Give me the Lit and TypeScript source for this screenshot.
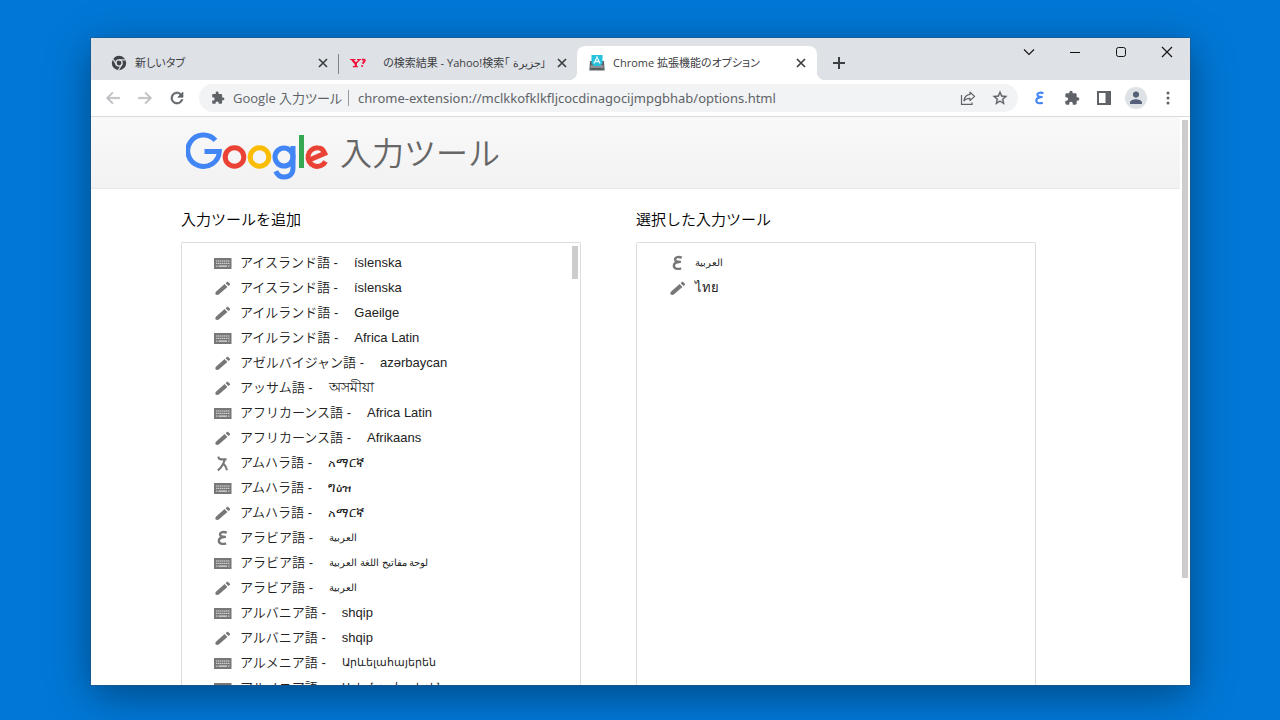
import { LitElement, html, css, svg, nothing } from "lit";
import { customElement, property } from "lit/decorators.js";

type IconName =
  | "back" | "forward" | "reload" | "puzzle" | "share" | "star" | "ain" | "panel"
  | "person" | "more" | "close" | "plus" | "chevron" | "minimize" | "maximize"
  | "exit" | "keyboard" | "pencil" | "amharic" | "chrome" | "yahoo" | "inputtools";

const keyDots = (y: number, from: number, count: number) =>
  Array.from({ length: count }, (_, i) => svg`<rect x=${from + i * 2} y=${y} width="1.2" height="1.2"/>`);

const ICONS: Record<IconName, { box: string; art: unknown }> = {
  back: { box: "0 0 24 24", art: svg`<path fill="currentColor" stroke="currentColor" stroke-width=".5" d="M21 11H6.83l5.59-5.59L11 4l-8 8 8 8 1.41-1.41L6.83 13H21z"/>` },
  forward: { box: "0 0 24 24", art: svg`<path fill="currentColor" stroke="currentColor" stroke-width=".5" d="M3 11h14.17l-5.59-5.59L13 4l8 8-8 8-1.41-1.41L17.17 13H3z"/>` },
  reload: { box: "0 0 24 24", art: svg`<path fill="currentColor" d="M17.65 6.35A7.96 7.96 0 0 0 12 4a8 8 0 1 0 7.73 10h-2.08A6 6 0 1 1 12 6c1.66 0 3.14.69 4.22 1.78L13 11h7V4z" stroke="currentColor" stroke-width=".9"/>` },
  puzzle: { box: "0 0 24 24", art: svg`<path fill="currentColor" d="M20.5 11H19V7c0-1.1-.9-2-2-2h-4V3.5a2.5 2.5 0 0 0-5 0V5H4c-1.1 0-2 .9-2 2v3.8h1.5a2.7 2.7 0 0 1 0 5.4H2V20c0 1.1.9 2 2 2h3.8v-1.5a2.7 2.7 0 0 1 5.4 0V22H17c1.1 0 2-.9 2-2v-4h1.5a2.5 2.5 0 0 0 0-5z"/>` },
  share: { box: "0 0 16 16", art: svg`<path fill="none" stroke="currentColor" stroke-width="1.2" stroke-linejoin="round" d="M1.5 5v9.4h10.6v-2M10 2.2l4.6 4.2L10 10.6V8.3C7 8.2 5.3 9 4 10.8c.4-3.6 2.3-6 6-6.4z"/>` },
  star: { box: "1 1 22 22", art: svg`<path fill="currentColor" stroke="currentColor" stroke-width=".4" d="M22 9.24l-7.19-.62L12 2 9.19 8.63 2 9.24l5.46 4.73L5.82 21 12 17.27 18.18 21l-1.63-7.03zM12 15.4l-3.76 2.27 1-4.28-3.32-2.88 4.38-.38L12 6.1l1.71 4.04 4.38.38-3.32 2.88 1 4.28z"/>` },
  ain: { box: "0 0 16 16", art: svg`<path fill="none" stroke="currentColor" stroke-width="2.1" d="M11.4 3.4C9.2 2.2 5.4 2.400 5.400 4.800c0 1.500 1.500 2.300 5.200 2.200M9.200 7.100C5.900 7.400 4.300 8.800 4.300 10.500c0 2.700 3.400 3.300 6.500 2.200"/>` },
  panel: { box: "0 0 16 16", art: svg`<path fill="currentColor" fill-rule="evenodd" d="M1 1h14v14H1zM3 3v10h6.5V3z"/>` },
  person: { box: "0 0 24 24", art: svg`<circle fill="#dee1e6" cx="12" cy="12" r="12"/><path fill="#54607a" d="M12 11.6a3.3 3.3 0 1 0 0-6.6 3.3 3.3 0 0 0 0 6.6zM5.5 18.5v-1.7c0-2.200 4.300-3.500 6.500-3.500s6.500 1.300 6.500 3.500v1.700z"/>` },
  more: { box: "0 0 16 16", art: svg`<g fill="currentColor"><circle cx="8" cy="3" r="1.5"/><circle cx="8" cy="8" r="1.5"/><circle cx="8" cy="13" r="1.5"/></g>` },
  close: { box: "0 0 16 16", art: svg`<path stroke="currentColor" stroke-width="1.7" d="M4 4l8 8M12 4l-8 8"/>` },
  plus: { box: "0 0 16 16", art: svg`<path stroke="currentColor" stroke-width="2" d="M8 2v12M2 8h12"/>` },
  chevron: { box: "0 0 16 16", art: svg`<path fill="none" stroke="currentColor" stroke-width="1.1" d="M3 5.5l5 5 5-5"/>` },
  minimize: { box: "0 0 16 16", art: svg`<path stroke="currentColor" d="M3 8.5h10"/>` },
  maximize: { box: "0 0 16 16", art: svg`<rect fill="none" stroke="currentColor" x="3.5" y="3.5" width="9" height="9" rx="2"/>` },
  exit: { box: "0 0 16 16", art: svg`<path stroke="currentColor" stroke-width="1.1" d="M3 3l10 10M13 3L3 13"/>` },
  keyboard: {
    box: "0 0 18 18",
    art: svg`<rect x="0" y="4" width="17.500" height="11" fill="#777"/><g fill="#e4e4e4">${keyDots(6.4, 2.2, 7)}${keyDots(8.8, 2.2, 7)}<rect x="2.2" y="11.500" width="1.2" height="1.2"/><rect x="4.500" y="11.500" width="8.500" height="1.2"/><rect x="14.200" y="11.500" width="1.2" height="1.2"/></g>`,
  },
  pencil: { box: "0 0 18 18", art: svg`<path fill="#777" d="M1.6 15.6c-.4-1.500-.2-2.400.6-3.100L10.600 5l2.800 3-8.300 7.200c-1 .8-2 1-3.500.4zM11.600 4.200l1.300-1.100c.5-.4 1-.4 1.500.1l1.300 1.300c.5.5.5 1.100.1 1.500L14.500 7.100z"/>` },
  amharic: { box: "0 0 18 18", art: svg`<path fill="none" stroke="#777" stroke-width="2.100" d="M4.300 2.600c.3 2.200 1.500 2.800 3 2.800h5.200M10.700 5.400C9.600 10 7.500 13.500 3.800 16.300M9 9.600c1.500.8 3 3.200 4 6.700"/>` },
  chrome: {
    box: "0 0 16 16",
    art: svg`<circle cx="8" cy="8" r="7.2" fill="#3f4246"/><circle cx="8" cy="8" r="3.8" fill="#dee1e6"/><circle cx="8" cy="8" r="2.4" fill="#3f4246"/><path stroke="#dee1e6" stroke-width="1.3" d="M8 4.9h6.500M5.300 9.500L2 4M10.700 9.500L7.500 15"/>`,
  },
  yahoo: {
    box: "0 0 16 16",
    art: svg`<g fill="none" stroke="#f0103a"><path stroke-width="1.2" d="M0 4.500h5.500M7 4.500h4M2.800 11.600h5"/><path stroke-width="2.200" d="M2.200 4.700l3.600 4v2.800"/><path stroke-width="1.400" d="M9.500 4.700L5.800 8.500"/><path stroke-width="1.900" d="M11.800 4.600h2.400c1 0 .6 1.600-.6 2.600l-1 1.600M12.300 10.300l-.3 1.500"/></g>`,
  },
  inputtools: {
    box: "0 0 16 16",
    art: svg`<path fill="#5d6268" d="M1 6h14l.7 9.500H.3z"/><path fill="#8b9196" d="M1.500 10h13v3h-13z"/><path fill="#26c1dc" d="M2.500 0h11v8L11 11H5L2.500 8z"/><path fill="none" stroke="#e8fbff" stroke-width="1.300" d="M5 8.500L8 2l3 6.500M6 6.500h4"/><path stroke="#555" d="M3 13.500h10"/>`,
  },
};

@customElement("ui-icon")
class UiIcon extends LitElement {
  @property() name: IconName = "close";
  static styles = css`
    :host { display: inline-flex; flex: none; width: 16px; height: 16px; }
    .art { display: block; width: 100%; height: 100%; }
  `;
  render() {
    const icon = ICONS[this.name];
    return html`<svg class="art" viewBox=${icon.box} aria-hidden="true">${icon.art}</svg>`;
  }
}

@customElement("google-logo")
class GoogleLogo extends LitElement {
  static styles = css`
    :host { display: block; flex: none; }
    .art { display: block; }
  `;
  render() {
    return html`<svg class="art" width="143" height="49" viewBox="0 0 143 49" role="img" aria-label="Google" fill="none">
      <path stroke="#4285f4" stroke-width="5" d="M29.4 8.3A15.8 15.8 0 1 0 33.300 19.500H18.500"/>
      <circle stroke="#ea4335" stroke-width="5" cx="48.500" cy="25" r="9.300"/>
      <circle stroke="#fbbc05" stroke-width="5" cx="73.500" cy="25" r="9.300"/>
      <circle stroke="#4285f4" stroke-width="5" cx="98" cy="25" r="9"/>
      <path stroke="#4285f4" stroke-width="5" d="M107 14V36c0 6-3.500 9-8.600 9-4 0-7.200-2.300-8.600-5.800"/>
      <path stroke="#34a853" stroke-width="5" d="M115.500 3v33"/>
      <path stroke="#ea4335" stroke-width="5" d="M122.700 28.300L138.800 21.400C137.400 17.800 134.500 15.800 131.600 15.800A9.300 9.300 0 1 0 139.500 29.500"/>
    </svg>`;
  }
}

type Script = "arabic" | "armenian" | "bengali";
interface Tool { icon: IconName; label?: string; native: string; script?: Script; }

const AVAILABLE: Tool[] = [
  { icon: "keyboard", label: "アイスランド語", native: "íslenska" },
  { icon: "pencil", label: "アイスランド語", native: "íslenska" },
  { icon: "pencil", label: "アイルランド語", native: "Gaeilge" },
  { icon: "keyboard", label: "アイルランド語", native: "Africa Latin" },
  { icon: "pencil", label: "アゼルバイジャン語", native: "azərbaycan" },
  { icon: "pencil", label: "アッサム語", native: "অসমীয়া", script: "bengali" },
  { icon: "keyboard", label: "アフリカーンス語", native: "Africa Latin" },
  { icon: "pencil", label: "アフリカーンス語", native: "Afrikaans" },
  { icon: "amharic", label: "アムハラ語", native: "አማርኛ" },
  { icon: "keyboard", label: "アムハラ語", native: "ግዕዝ" },
  { icon: "pencil", label: "アムハラ語", native: "አማርኛ" },
  { icon: "ain", label: "アラビア語", native: "العربية", script: "arabic" },
  { icon: "keyboard", label: "アラビア語", native: "لوحة مفاتيح اللغة العربية", script: "arabic" },
  { icon: "pencil", label: "アラビア語", native: "العربية", script: "arabic" },
  { icon: "keyboard", label: "アルバニア語", native: "shqip" },
  { icon: "pencil", label: "アルバニア語", native: "shqip" },
  { icon: "keyboard", label: "アルメニア語", native: "Արևելահայերեն", script: "armenian" },
  { icon: "keyboard", label: "アルメニア語", native: "Արևմտահայերեն", script: "armenian" },
];

const SELECTED: Tool[] = [
  { icon: "ain", native: "العربية", script: "arabic" },
  { icon: "pencil", native: "ไทย" },
];

@customElement("tool-list")
class ToolList extends LitElement {
  @property() heading = "";
  @property({ attribute: false }) tools: Tool[] = [];
  @property({ type: Boolean }) scrolling = false;
  static styles = css`
    :host { display: flex; flex-direction: column; flex: 0 1 400px; min-width: 0; min-height: 0; color: #222; font-family: "Liberation Sans", "Noto Sans CJK JP", sans-serif; }
    .heading { margin: 0 0 11px; font-size: 15px; font-weight: 350; line-height: 22px; color: #000; }
    .frame { display: flex; flex: 1; min-height: 0; overflow: hidden; border: 1px solid #ddd; border-bottom: 0; border-radius: 2px 2px 0 0; }
    .rows { flex: 1; min-width: 0; margin: 0; padding: 7px 0 0 32px; list-style: none; }
    .row { display: flex; align-items: center; gap: 8px; width: 100%; height: 25px; padding: 0; border: 0; background: none; color: inherit; font: 350 13px/25px "Liberation Sans", "Noto Sans CJK JP", sans-serif; text-align: start; white-space: nowrap; cursor: pointer; }
    .icon { width: 18px; height: 18px; color: #777; }
    .native { margin-inline-start: 8px; }
    .only { margin-inline-start: 0; }
    .arabic { font-size: 10px; }
    .armenian { font-size: 11px; }
    .bengali { font-size: 14px; }
    .track { flex: none; width: 6px; padding: 3px 2px; }
    .thumb { height: 33px; background: #ccc; }
  `;
  render() {
    return html`
      <h2 class="heading">${this.heading}</h2>
      <div class="frame">
        <ul class="rows">
          ${this.tools.map((t) => html`<li><button class="row">
            <ui-icon class="icon" name=${t.icon}></ui-icon>${t.label ? html`<span>${t.label} -</span>` : nothing}
            <span class="native ${t.label ? "" : "only"} ${t.script ?? ""}">${t.native}</span>
          </button></li>`)}
        </ul>
        ${this.scrolling ? html`<div class="track"><div class="thumb"></div></div>` : nothing}
      </div>`;
  }
}

const TABS: { icon: IconName; title: string; active?: boolean; end?: boolean }[] = [
  { icon: "chrome", title: "新しいタブ" },
  { icon: "yahoo", title: "の検索結果 - Yahoo!検索「 جزيرة」", end: true },
  { icon: "inputtools", title: "Chrome 拡張機能のオプション", active: true },
];

@customElement("app-root")
class AppRoot extends LitElement {
  static styles = css`
    :host { display: flex; box-sizing: border-box; height: 100vh; padding: 38px 90px 35px 91px; background: #0078d7; overflow: hidden; font-family: "Open Sans", "Noto Sans CJK JP", sans-serif; }
    .window { display: flex; flex-direction: column; flex: 1; min-width: 0; background: #fff; box-shadow: 0 0 0 1px rgba(40, 80, 120, 0.5), 0 10px 40px rgba(0, 0, 0, 0.4); }
    button { display: inline-flex; align-items: center; justify-content: center; flex: none; padding: 0; border: 0; background: none; color: inherit; }
    .strip { display: flex; align-items: flex-end; height: 42px; flex: none; padding-left: 8px; background: #dee1e6; color: #3c4043; }
    .tab { position: relative; display: flex; align-items: center; gap: 8px; flex: 0 1 239px; min-width: 0; height: 34px; box-sizing: border-box; padding: 0 7px 0 12px; font-size: 11px; }
    .tab.divided::after { content: ""; position: absolute; right: -1px; top: 8px; width: 1px; height: 20px; background: #808388; }
    .tab.active { flex-basis: 240px; padding-right: 8px; background: #fff; border-radius: 8px 8px 0 0; }
    .tab.active::before, .tab.active::after { content: ""; position: absolute; bottom: 0; width: 8px; height: 8px; }
    .tab.active::before { left: -8px; background: radial-gradient(circle at 0 0, #dee1e6 8px, #fff 8px); }
    .tab.active::after { right: -8px; background: radial-gradient(circle at 100% 0, #dee1e6 8px, #fff 8px); }
    .title { flex: 1; min-width: 0; overflow: hidden; white-space: nowrap; font-feature-settings: "palt"; line-height: 20px; }
    .title.end { text-align: end; }
    .add { width: 28px; height: 34px; margin-left: 8px; }
    .controls { display: flex; align-self: flex-start; margin-left: auto; color: #111; }
    .control { width: 46px; height: 28px; }
    .toolbar { display: flex; align-items: center; gap: 6px; height: 36px; flex: none; padding: 0 6px; border-bottom: 1px solid #d8dadd; color: #5f6368; }
    .group { display: flex; }
    .tool { width: 32px; height: 32px; }
    .muted { color: #babcbe; }
    .large { width: 18px; height: 18px; }
    .small { width: 14px; height: 14px; }
    .avatar { width: 22px; height: 22px; }
    .blue { color: #4285f4; }
    .omnibox { display: flex; align-items: center; flex: 1; min-width: 0; height: 28px; box-sizing: border-box; padding: 0 2px 0 12px; border-radius: 14px; background: #f1f3f4; font-size: 13px; }
    .site { margin-left: 8px; padding-right: 6px; border-right: 1px solid #96999c; line-height: 16px; white-space: nowrap; font-feature-settings: "palt"; }
    .url { flex: 1; min-width: 0; padding: 0; margin-left: 9px; border: 0; outline: 0; background: none; color: inherit; font: 13px/20px "Noto Sans", "Open Sans", sans-serif; }
    .viewport { display: flex; flex: 1; min-height: 0; }
    .page { display: flex; flex-direction: column; flex: 1; min-width: 0; overflow: hidden; }
    .banner { display: flex; align-items: flex-start; gap: 11px; height: 72px; flex: none; box-sizing: border-box; padding: 15px 0 0 95px; background: linear-gradient(#f9f9f9, #f2f2f2); border-bottom: 1px solid #e8e8e8; }
    .name { margin: 0; color: #666; font: 350 32px/38px "Noto Sans CJK JP", sans-serif; }
    .columns { display: flex; gap: 55px; flex: 1; min-height: 0; padding: 20px 0 0 90px; }
    .scroll { width: 6px; flex: none; padding: 3px 2px 0; }
    .thumb { height: 81%; background: #ccc; }
  `;

  render() {
    return html`
      <div class="window">
        <header class="strip">
          ${TABS.map((t, i) => html`
            <div class="tab ${t.active ? "active" : ""} ${i === 0 ? "divided" : ""}">
              <ui-icon name=${t.icon}></ui-icon>
              <span class="title ${t.end ? "end" : ""}">${t.title}</span>
              <button aria-label="閉じる"><ui-icon name="close"></ui-icon></button>
            </div>`)}
          <button class="add" aria-label="新しいタブ"><ui-icon name="plus"></ui-icon></button>
          <div class="controls">
            ${(["chevron", "minimize", "maximize", "exit"] as IconName[]).map((n) => html`
              <button class="control" aria-label=${n}><ui-icon name=${n}></ui-icon></button>`)}
          </div>
        </header>
        <nav class="toolbar">
          <div class="group">
            <button class="tool muted" aria-label="戻る"><ui-icon class="large" name="back"></ui-icon></button>
            <button class="tool muted" aria-label="進む"><ui-icon class="large" name="forward"></ui-icon></button>
            <button class="tool" aria-label="再読み込み"><ui-icon class="large" name="reload"></ui-icon></button>
          </div>
          <div class="omnibox">
            <ui-icon class="small" name="puzzle"></ui-icon>
            <label class="site" for="url">Google 入力ツール</label>
            <input class="url" id="url" type="text" value="chrome-extension://mclkkofklkfljcocdinagocijmpgbhab/options.html" />
            <button class="tool" aria-label="共有"><ui-icon name="share"></ui-icon></button>
            <button class="tool" aria-label="ブックマーク"><ui-icon name="star"></ui-icon></button>
          </div>
          <div class="group">
            <button class="tool blue" aria-label="Google 入力ツール"><ui-icon name="ain"></ui-icon></button>
            <button class="tool" aria-label="拡張機能"><ui-icon name="puzzle"></ui-icon></button>
            <button class="tool" aria-label="サイドパネル"><ui-icon name="panel"></ui-icon></button>
            <button class="tool" aria-label="プロフィール"><ui-icon class="avatar" name="person"></ui-icon></button>
            <button class="tool" aria-label="メニュー"><ui-icon name="more"></ui-icon></button>
          </div>
        </nav>
        <div class="viewport">
          <main class="page">
            <div class="banner">
              <google-logo></google-logo>
              <h1 class="name">入力ツール</h1>
            </div>
            <div class="columns">
              <tool-list heading="入力ツールを追加" .tools=${AVAILABLE} scrolling></tool-list>
              <tool-list heading="選択した入力ツール" .tools=${SELECTED}></tool-list>
            </div>
          </main>
          <div class="scroll"><div class="thumb"></div></div>
        </div>
      </div>`;
  }
}
